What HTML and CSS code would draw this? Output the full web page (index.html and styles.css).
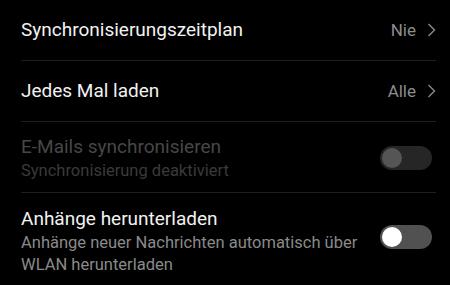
FILE: index.html
```html
<!DOCTYPE html>
<html lang="de">
<head>
<meta charset="utf-8">
<link rel="stylesheet" href="styles.css">
</head>
<body>
<div class="list">
  <div class="row row-nav">
    <div class="title">Synchronisierungszeitplan</div>
    <div class="value">Nie
      <svg class="chev" width="9" height="14" viewBox="0 0 9 14"><path d="M1.5 1 L7.5 7 L1.5 13" fill="none" stroke="#8a8a8a" stroke-width="1.4"/></svg>
    </div>
  </div>
  <div class="row row-nav">
    <div class="title">Jedes Mal laden</div>
    <div class="value">Alle
      <svg class="chev" width="9" height="14" viewBox="0 0 9 14"><path d="M1.5 1 L7.5 7 L1.5 13" fill="none" stroke="#8a8a8a" stroke-width="1.4"/></svg>
    </div>
  </div>
  <div class="row row-switch disabled r3">
    <div class="texts">
      <div class="title">E-Mails synchronisieren</div>
      <div class="sub">Synchronisierung deaktiviert</div>
    </div>
    <div class="toggle"><span class="thumb"></span></div>
  </div>
  <div class="row row-switch last r4">
    <div class="texts">
      <div class="title">Anhänge herunterladen</div>
      <div class="sub">Anhänge neuer Nachrichten automatisch über WLAN herunterladen</div>
    </div>
    <div class="toggle"><span class="thumb"></span></div>
  </div>
</div>
</body>
</html>
```
FILE: styles.css
```css
html, body {
  margin: 0;
  padding: 0;
  background: #000;
}
body {
  font-family: Roboto, "Noto Sans", sans-serif;
  width: 450px;
  height: 285px;
  overflow: hidden;
}
.list {
  padding: 0 14px 0 21px;
}
.row {
  display: flex;
  align-items: center;
  border-bottom: 1px solid #1e1e1e;
}
.row.last {
  border-bottom: none;
}
.row-nav {
  height: 60px;
}
.title {
  font-size: 19px;
  line-height: 26px;
  color: #f2f2f2;
}
.row-nav .title {
  flex: 1;
}
.value {
  display: flex;
  align-items: center;
  gap: 11px;
  font-size: 17px;
  color: #8c8c8c;
}
.chev {
  display: block;
}
.texts {
  flex: 1;
}
.sub {
  font-size: 16.5px;
  line-height: 22px;
  color: #8a8a8a;
}
.r3 {
  padding: 12px 0 10px;
}
.r4 {
  padding: 13px 0 10px;
  align-items: flex-start;
}
.r4 .toggle {
  margin-top: 19px;
}
.r4 .sub {
  max-width: 350px;
}
.disabled .title {
  color: #474747;
}
.disabled .sub {
  color: #3a3a3a;
}
.toggle {
  width: 52px;
  height: 24px;
  border-radius: 12px;
  background: #515151;
  margin-right: 4px;
  margin-left: 16px;
  display: flex;
  align-items: center;
  padding: 0 2px;
  box-sizing: border-box;
  flex-shrink: 0;
}
.thumb {
  width: 20px;
  height: 20px;
  border-radius: 50%;
  background: #fff;
}
.disabled .toggle {
  background: #262626;
}
.disabled .thumb {
  background: #555;
}
```
